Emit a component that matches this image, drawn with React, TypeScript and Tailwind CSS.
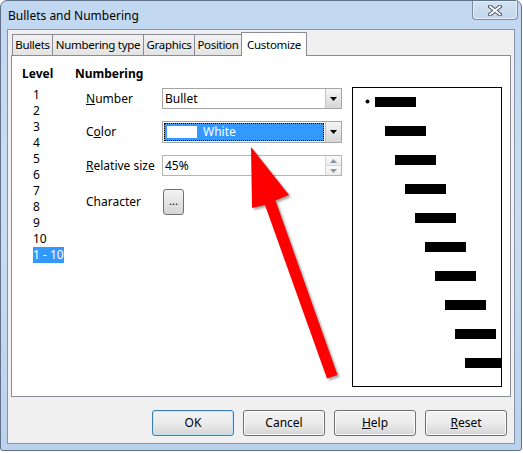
import { useState } from "react";

const tabs = [
  { label: "Bullets", w: "w-[41px]" },
  { label: "Numbering type", w: "w-[92px]" },
  { label: "Graphics", w: "w-[52px]" },
  { label: "Position", w: "w-[48px]" },
];

const levels = ["1", "2", "3", "4", "5", "6", "7", "8", "9", "10"];

const DropArrow = () => (
  <div className="w-[16px] h-full border-l border-[#c5c5c5] bg-gradient-to-b from-[#f5f5f5] to-[#d6d6d6] flex items-center justify-center">
    <svg width="7" height="4" viewBox="0 0 7 4">
      <path d="M0 0 H7 L3.5 4 Z" fill="#000" />
    </svg>
  </div>
);

const BottomButton = ({
  label,
  underline,
  primary,
}: {
  label: string;
  underline?: number;
  primary?: boolean;
}) => (
  <button
    className={`w-[82px] h-[26px] rounded-[3px] border text-[12px] text-black bg-gradient-to-b from-[#f3f3f3] via-[#ebebeb] to-[#d5d5d5] ${
      primary
        ? "border-[#3c7fb1] shadow-[inset_0_0_0_1px_#bfe3f7]"
        : "border-[#707070] shadow-[inset_0_0_0_1px_#fbfbfb]"
    }`}
  >
    {underline === undefined ? (
      label
    ) : (
      <>
        {label.slice(0, underline)}
        <span className="underline">{label[underline]}</span>
        {label.slice(underline + 1)}
      </>
    )}
  </button>
);

const App = () => {
  const [level] = useState("1 - 10");

  return (
    <div
      className="relative w-[523px] h-[453px] bg-white overflow-hidden text-[12px] text-black"
      style={{ fontFamily: '"Noto Sans", "DejaVu Sans", sans-serif' }}
    >
      {/* window frame */}
      <div className="w-[522px] h-[451px] rounded-t-[7px] rounded-b-[3px] border border-[#5f7289] bg-gradient-to-b from-[#c2d8f0] via-[#c9dcf1] to-[#bcd2ec] px-[6px] pb-[6px] flex flex-col">
        {/* title bar */}
        <div className="h-[28px] flex justify-between shrink-0">
          <div className="pt-[6px] pl-[1px] text-[12px] text-black">Bullets and Numbering</div>
          <div className="w-[46px] h-[19px] -mr-[3px] rounded-b-[4px] border border-t-0 border-[#7b8ba0] bg-gradient-to-b from-[#d3e2f3] to-[#c3d6ec] shadow-[inset_0_0_0_1px_#e6eef8] flex items-center justify-center">
            <svg width="14" height="11" viewBox="0 0 14 11">
              <path
                d="M2 1.5 L12 9.5 M12 1.5 L2 9.5"
                stroke="#4b5a6e"
                strokeWidth="4"
                strokeLinecap="round"
              />
              <path
                d="M2 1.5 L12 9.5 M12 1.5 L2 9.5"
                stroke="#fff"
                strokeWidth="2"
                strokeLinecap="round"
              />
            </svg>
          </div>
        </div>

        {/* client area */}
        <div className="flex-1 bg-[#f0f0f0] border border-[#8696aa] flex flex-col">
          {/* tabs */}
          <div className="h-[25px] flex items-end pl-[4px] pr-[3px] shrink-0">
            {tabs.map((t) => (
              <div
                key={t.label}
                className={`${t.w} h-[21px] border border-b-0 border-[#898c95] -mr-px bg-gradient-to-b from-[#f2f2f2] to-[#e3e3e3] flex items-center justify-center whitespace-nowrap text-[11.5px] tracking-[-0.3px]`}
              >
                {t.label}
              </div>
            ))}
            <div className="relative z-10 w-[66px] h-[24px] -mb-px border border-b-0 border-[#898c95] bg-white flex items-center justify-center whitespace-nowrap text-[11.5px] tracking-[-0.3px]">
              Customize
            </div>
          </div>

          {/* tab panel */}
          <div className="mx-[3px] h-[342px] bg-white border border-[#898c95] flex">
            {/* levels */}
            <div className="w-[63px] pl-[10px] pt-[10px] flex flex-col">
              <div className="h-[16px] leading-[16px] font-bold">Level</div>
              <div className="mt-[5px] pl-[11px] flex flex-col">
                {levels.map((l) => (
                  <div key={l} className="h-[16px] leading-[16px]">
                    {l}
                  </div>
                ))}
                <div
                  className={`h-[16px] leading-[16px] w-[31px] ${
                    level === "1 - 10" ? "bg-[#3399ff] text-white" : ""
                  }`}
                >
                  1 - 10
                </div>
              </div>
            </div>

            {/* numbering */}
            <div className="w-[267px] pt-[10px] flex flex-col">
              <div className="h-[16px] leading-[16px] font-bold">Numbering</div>

              <div className="mt-[6px] flex items-center h-[21px]">
                <div className="w-[87px] pl-[11px]">
                  <span className="underline">N</span>umber
                </div>
                <div className="w-[180px] h-[21px] border border-[#a5a5a5] bg-white flex">
                  <div className="flex-1 pl-[2px] leading-[19px]">Bullet</div>
                  <DropArrow />
                </div>
              </div>

              <div className="mt-[12px] flex items-center h-[22px]">
                <div className="w-[87px] pl-[11px]">
                  C<span className="underline">o</span>lor
                </div>
                <div className="w-[180px] h-[22px] border border-[#a5a5a5] bg-white flex">
                  <div className="flex-1 m-px bg-[#3399ff] border border-dotted border-black flex items-center pl-[2px]">
                    <div className="w-[30px] h-[12px] bg-white" />
                    <span className="ml-[6px] text-white">White</span>
                  </div>
                  <DropArrow />
                </div>
              </div>

              <div className="mt-[12px] flex items-center h-[21px]">
                <div className="w-[87px] pl-[11px]">
                  <span className="underline">R</span>elative size
                </div>
                <div className="w-[180px] h-[21px] border border-[#b5b5b5] bg-white flex">
                  <div className="flex-1 pl-[2px] leading-[19px]">45%</div>
                  <div className="w-[16px] h-full flex flex-col border-l border-[#d5d5d5]">
                    <div className="flex-1 flex items-center justify-center border-b border-[#d5d5d5] bg-gradient-to-b from-[#fafafa] to-[#ececec]">
                      <svg width="7" height="4" viewBox="0 0 7 4">
                        <path d="M0 4 H7 L3.5 0 Z" fill="#8a96a4" />
                      </svg>
                    </div>
                    <div className="flex-1 flex items-center justify-center bg-gradient-to-b from-[#fafafa] to-[#ececec]">
                      <svg width="7" height="4" viewBox="0 0 7 4">
                        <path d="M0 0 H7 L3.5 4 Z" fill="#8a96a4" />
                      </svg>
                    </div>
                  </div>
                </div>
              </div>

              <div className="mt-[13px] flex items-center h-[26px]">
                <div className="w-[88px] pl-[11px]">Character</div>
                <button className="w-[21px] h-[26px] rounded-[3px] border border-[#707070] bg-gradient-to-b from-[#f3f3f3] to-[#d5d5d5] text-[11px] leading-none pb-[3px]">
                  ...
                </button>
              </div>
            </div>

            {/* preview */}
            <div className="ml-[10px] mt-[31px] w-[150px] h-[300px] border border-black bg-white overflow-hidden">
              <svg width="148" height="298" viewBox="0 0 148 298">
                <circle cx="14.5" cy="13.5" r="2" fill="#000" />
                {levels.map((l, i) => (
                  <rect key={l} x={22 + 10 * i} y={9 + 29 * i} width="41" height="10" fill="#000" />
                ))}
              </svg>
            </div>
          </div>

          {/* buttons */}
          <div className="mt-[13px] flex justify-end gap-[9px] pr-[7px]">
            <BottomButton label="OK" primary />
            <BottomButton label="Cancel" />
            <BottomButton label="Help" underline={0} />
            <BottomButton label="Reset" underline={0} />
          </div>
        </div>
      </div>

      {/* red annotation arrow */}
      <svg
        className="absolute left-0 top-0 pointer-events-none drop-shadow-[2px_2px_1px_rgba(0,0,0,0.35)]"
        width="523"
        height="453"
        viewBox="0 0 523 453"
      >
        <path
          d="M251 147 L289 195 L275.5 200.5 L337.5 375 L327 378.5 L265 205 L252 208 Z"
          fill="#ff0000"
        />
      </svg>
    </div>
  );
};

export default App;
